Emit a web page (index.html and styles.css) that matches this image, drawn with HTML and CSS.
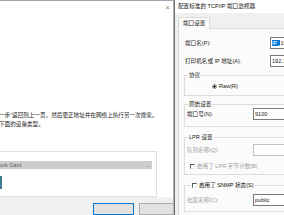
FILE: index.html
```html
<!DOCTYPE html>
<html lang="zh-CN">
<head>
<meta charset="utf-8">
<title>配置标准的 TCP/IP 端口监视器</title>
<link rel="stylesheet" href="styles.css">
</head>
<body>
<div class="screen">
  <div class="wizard">
    <div class="wiz-top"><span class="close">×</span></div>
    <div class="wiz-body">
      <p class="msg">一步”返回到上一页，然后更正地址并在网络上执行另一次搜索。<br>下面的设备类型。</p>
      <div class="list">
        <div class="list-head"><span>ork Card</span><span class="chev">⌄</span></div>
        <div class="list-item"><span class="dev-icon"></span></div>
      </div>
    </div>
    <div class="wiz-foot">
      <span class="btn primary"></span>
      <span class="btn"></span>
    </div>
  </div>
  <div class="dialog">
    <div class="dlg-title">配置标准的 TCP/IP 端口监视器</div>
    <div class="dlg-body">
      <div class="tabs"><span class="tab">端口设置</span></div>
      <div class="panel">
        <div class="row first">
          <span class="lbl wide">端口名(P):</span>
          <span class="field"><span class="sel">IP_</span>192.168.1.100</span>
        </div>
        <div class="row second">
          <span class="lbl wide">打印机名或 IP 地址(A):</span>
          <span class="field">192.168.1.100</span>
        </div>
        <fieldset class="grp g-proto">
          <legend>协议</legend>
          <div class="radio-row"><span class="radio"></span><span>Raw(R)</span></div>
        </fieldset>
        <fieldset class="grp g-raw">
          <legend>原始设置</legend>
          <div class="row">
            <span class="lbl">端口号(N):</span>
            <span class="field">9100</span>
          </div>
        </fieldset>
        <fieldset class="grp g-lpr">
          <legend>LPR 设置</legend>
          <div class="row">
            <span class="lbl off">队列名称(Q):</span>
            <span class="field off"></span>
          </div>
          <div class="check-row off"><span class="check"></span><span>启用了 LPR 字节计数(B)</span></div>
        </fieldset>
        <fieldset class="grp g-snmp">
          <legend class="check-row"><span class="check"></span><span class="strong">启用了 SNMP 状态(S)</span></legend>
          <div class="row">
            <span class="lbl off">社区名称(C):</span>
            <span class="field">public</span>
          </div>
        </fieldset>
      </div>
    </div>
  </div>
</div>
</body>
</html>
```
FILE: styles.css
```css
html, body {
  margin: 0;
  padding: 0;
  background: #ffffff;
}
body {
  font-family: "Liberation Sans", "Noto Sans CJK SC", sans-serif;
  font-size: 5.6px;
  color: #1e1e1e;
}
.screen {
  display: flex;
  width: 284px;
  height: 215px;
  overflow: hidden;
}

/* background wizard window */
.wizard {
  flex: 0 0 174px;
  display: flex;
  flex-direction: column;
  overflow: hidden;
  background: #ffffff;
  border-top: 1px solid #9ea7b0;
  box-sizing: border-box;
}
.wiz-top {
  height: 13px;
  display: flex;
  justify-content: flex-end;
  align-items: center;
  padding-right: 4px;
}
.close {
  font-size: 8px;
  line-height: 8px;
  color: #7a7a7a;
}
.wiz-body {
  flex: 1;
  padding-right: 17px;
}
.msg {
  margin: 97px 0 0 -1px;
  line-height: 9px;
  white-space: nowrap;
  color: #222;
}
.list {
  margin-top: 22px;
  height: 35px;
  border: 1px solid #dedede;
  border-left: none;
  padding: 9px 4px 0 0;
}
.list-head {
  height: 8px;
  background: #cdcdcd;
  display: flex;
  justify-content: space-between;
  align-items: center;
  color: #5a5a5a;
  padding-right: 3px;
}
.chev {
  color: #8a8a8a;
  font-size: 5px;
}
.list-item {
  margin-top: 7px;
  height: 13px;
}
.dev-icon {
  display: block;
  width: 2px;
  height: 13px;
  background: #3f7f96;
}
.wiz-foot {
  flex: 0 0 10px;
  box-sizing: border-box;
  background: #f0f0f0;
  display: flex;
  align-items: flex-start;
  padding: 6px 0 0 93px;
  gap: 5px;
}
.btn {
  flex: 0 0 41px;
  height: 12px;
  box-sizing: border-box;
  border: 1px solid #adadad;
  background: #e1e1e1;
}
.btn.primary {
  border-color: #0078d7;
}

/* front dialog */
.dialog {
  flex: 0 0 170px;
  display: flex;
  flex-direction: column;
  border-left: 1px solid #6f6f6f;
  box-shadow: -1px 0 0 #b4b4b4;
  background: #f0f0f0;
}
.dlg-title {
  height: 14px;
  line-height: 13px;
  background: #ffffff;
  padding-left: 3px;
  white-space: nowrap;
  color: #111;
}
.dlg-body {
  flex: 1;
  padding: 4px 0 0 3px;
}
.tabs {
  display: flex;
  position: relative;
  z-index: 1;
  margin-bottom: -1px;
}
.tab {
  height: 11px;
  line-height: 11px;
  padding: 0 4px;
  border: 1px solid #d9d9d9;
  border-bottom: none;
  background: #fbfbfb;
  white-space: nowrap;
}
.panel {
  border: 1px solid #d9d9d9;
  background: #fbfbfb;
  padding: 8px 0 0 5px;
  height: 200px;
}
.row {
  display: flex;
  align-items: center;
  height: 12px;
}
.row.first, .row.second {
  padding-left: 1px;
}
.row.second {
  margin-top: 6px;
}
.lbl {
  flex: 0 0 66px;
  white-space: nowrap;
}
.lbl.wide {
  flex-basis: 85px;
}
.lbl.off, .check-row.off {
  color: #9d9d9d;
}
.field {
  flex: 0 0 70px;
  height: 12px;
  box-sizing: border-box;
  border: 1px solid #7a7a7a;
  background: #ffffff;
  line-height: 10px;
  padding-left: 1px;
  white-space: nowrap;
  overflow: hidden;
}
.field.off {
  border-color: #c4c4c4;
}
.sel {
  background: #0078d7;
  color: #ffffff;
}

.grp {
  margin: 4px 0 0 0;
  padding: 3px 0 5px 2px;
  border: 1px solid #dcdcdc;
  border-right: none;
  min-width: 0;
}
.grp legend {
  padding: 0 1px;
  margin-left: 1px;
  line-height: 8px;
  white-space: nowrap;
}
.g-raw {
  padding-top: 0;
  padding-bottom: 6px;
}
.g-lpr {
  margin-top: 6px;
  padding-bottom: 4px;
}
.g-snmp {
  margin-top: 6px;
  padding-top: 5px;
}
.radio-row {
  display: flex;
  align-items: center;
  gap: 2px;
  height: 8px;
  margin-left: 25px;
}
.radio {
  width: 5px;
  height: 5px;
  box-sizing: border-box;
  border-radius: 50%;
  border: 1px solid #8a8a8a;
  background: radial-gradient(circle, #333 0 1px, #fff 1.2px);
}
.check-row {
  display: flex;
  align-items: center;
  gap: 2px;
  height: 8px;
  white-space: nowrap;
}
.g-lpr .check-row {
  margin: 6px 0 0 3px;
}
.g-snmp legend.check-row {
  margin-left: 4px;
}
.strong {
  color: #0a0a0a;
}
.check {
  width: 5px;
  height: 5px;
  box-sizing: border-box;
  border-top: 1px solid #555;
  border-left: 1px solid #555;
  border-right: 1px solid #eee;
  border-bottom: 1px solid #eee;
  background: #fff;
}
```
